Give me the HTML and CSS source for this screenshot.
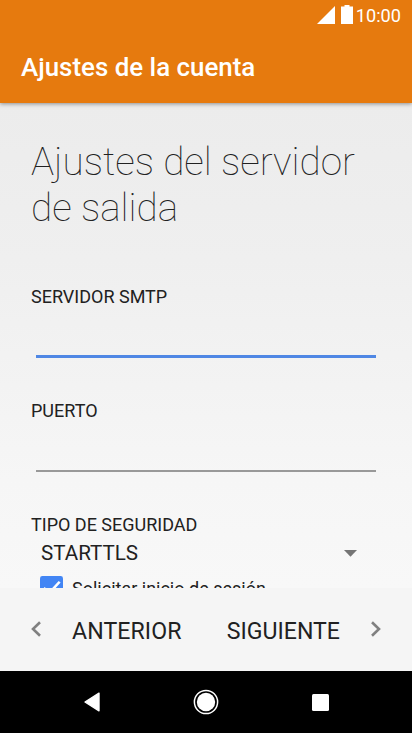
FILE: index.html
```
<!DOCTYPE html>
<html lang="es">
<head>
	<meta charset="utf-8">
	<title>Ajustes de la cuenta</title>
	<link rel="stylesheet" href="styles.css">
</head>
<body>
	<div id="box">
		<header class="top">
			<div class="status">
				<svg class="signal" width="18" height="18" viewBox="0 0 18 18"><path d="M0 18L18 0V18z"/></svg>
				<svg class="battery" width="12" height="19" viewBox="0 0 12 19"><path d="M3.5 0h5v1.5H12V19H0V1.5h3.5z"/></svg>
				<span class="time">10:00</span>
			</div>
			<div class="title">Ajustes de la cuenta</div>
		</header>

		<div class="content">
			<h1>Ajustes del servidor<br>de salida</h1>
			<div class="field">
				<label for="smtp">SERVIDOR SMTP</label>
				<input id="smtp" class="active" type="text">
			</div>
			<div class="field">
				<label for="port">PUERTO</label>
				<input id="port" type="text">
			</div>
			<div class="field security">
				<label>TIPO DE SEGURIDAD</label>
				<div class="select">
					<span class="value">STARTTLS</span>
					<svg width="13" height="7" viewBox="0 0 13 7"><path d="M0 0h13L6.5 6.8z"/></svg>
				</div>
			</div>
			<div class="check">
				<svg width="23" height="23" viewBox="0 0 24 24"><rect width="24" height="24" rx="2.5" fill="#4285f4"/><path d="M4 12.5l5.5 5.5L20.5 6" fill="none" stroke="#fff" stroke-width="2.7"/></svg>
				<span class="check-text">Solicitar inicio de sesión</span>
			</div>
		</div>

		<div class="buttons">
			<div class="prev">
				<svg width="10" height="16" viewBox="0 0 10 16"><path d="M9 1.2L2 8l7 6.8"/></svg>
				<span class="prev-text">ANTERIOR</span>
			</div>
			<div class="next">
				<span class="next-text">SIGUIENTE</span>
				<svg width="10" height="16" viewBox="0 0 10 16"><path d="M1 1.2L8 8l-7 6.8"/></svg>
			</div>
		</div>

		<div class="nav">
			<svg width="16" height="20" viewBox="0 0 16 20"><path d="M15 1.2v17.6L1 10z" fill="#fff" stroke="#fff" stroke-width="1.4" stroke-linejoin="round"/></svg>
			<svg width="26" height="26" viewBox="0 0 26 26"><circle cx="13" cy="13" r="11.6" fill="none" stroke="#fff" stroke-width="1.5"/><circle cx="13" cy="13" r="9.2" fill="#fff"/></svg>
			<svg width="17" height="17" viewBox="0 0 17 17"><rect width="17" height="17" rx="1.5" fill="#fff"/></svg>
		</div>
	</div>
</body>
</html>
```
FILE: styles.css
```
*{
	margin: 0;
	padding: 0;
	box-sizing: border-box;
}
body{
	font-family: Roboto, "Liberation Sans", sans-serif;
	color: #212121;
}
svg{
	display: block;
	flex: none;
}
#box{
	width: 412px;
	height: 733px;
	display: flex;
	flex-direction: column;
	overflow: hidden;
	background: linear-gradient(#ececec 103px, #efefef 260px, #f6f6f6 480px, #f8f8f8 588px);
}
#box span, .title, h1, label{
	white-space: nowrap;
}

.top{
	height: 103px;
	flex: none;
	background: #e67a0e;
	color: #fff;
	box-shadow: 0 1px 4px rgba(0,0,0,0.4);
}
.status{
	height: 32px;
	padding: 5px 11px 0 0;
	display: flex;
	justify-content: flex-end;
	align-items: flex-start;
	fill: #fff;
}
.signal{
	margin: 1px 6px 0 0;
}
.battery{
	margin-right: 3px;
}
.time{
	font-size: 18.2px;
	line-height: 22px;
}
.title{
	padding-left: 21px;
	font-size: 25.9px;
	font-weight: 500;
	line-height: 71px;
}

.content{
	height: 485px;
	flex: none;
	padding: 36px 31px 0;
	overflow: hidden;
}
h1{
	font-size: 38.7px;
	font-weight: 100;
	line-height: 46px;
	color: #212121;
	margin-bottom: 55px;
}
.field{
	height: 114px;
}
label{
	display: block;
	font-size: 18px;
	line-height: 22px;
}
input{
	display: block;
	width: 340px;
	height: 50px;
	margin-left: 5px;
	border: 0;
	border-bottom: 2px solid #999;
	background: none;
	font-size: 21px;
	outline: none;
}
input.active{
	border-bottom: 3px solid #4f87e4;
}
.security{
	height: 62px;
}
.select{
	display: flex;
	align-items: center;
	justify-content: space-between;
	height: 34px;
	padding: 0 24px 0 10px;
	font-size: 20.6px;
	fill: #757575;
}
.check{
	display: flex;
	padding-left: 9px;
}
.check-text{
	margin-left: 9px;
	font-size: 18px;
	line-height: 26px;
}

.buttons{
	height: 83px;
	flex: none;
	display: flex;
	justify-content: space-between;
	align-items: center;
	padding: 0 31px;
	background: #f5f5f5;
	font-size: 23.1px;
}
.buttons svg{
	fill: none;
	stroke: #808080;
	stroke-width: 2.6;
}
.prev, .next{
	display: flex;
	align-items: center;
}
.prev svg, .next svg{
	margin-bottom: 2px;
}
.prev-text{
	margin-left: 31px;
	padding-top: 3px;
	letter-spacing: 0.1px;
}
.next-text{
	margin-right: 31px;
	padding-top: 3px;
}

.nav{
	height: 62px;
	flex: none;
	display: flex;
	justify-content: space-between;
	align-items: center;
	padding: 0 83px 0 84px;
	background: #000;
}
```
